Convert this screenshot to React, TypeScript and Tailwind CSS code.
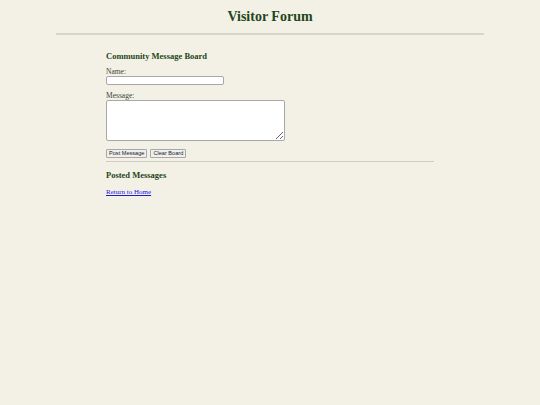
export default function App() {
  return (
    <div
      className="min-h-[405px] bg-[#f3f0e5] text-[#333] pt-[9px]"
      style={{ fontFamily: '"Liberation Serif", "DejaVu Serif", serif' }}
    >
      {/* Header */}
      <div className="mx-auto w-[428px]">
        <h1 className="text-center text-[14px] leading-[16px] font-bold text-[#1e4620]">Visitor Forum</h1>
        <div className="mt-[8px] h-[2px] bg-[#d8d5cc]" />
      </div>

      {/* Board */}
      <div className="mx-auto w-[328px] mt-[16px]">
        <h2 className="text-[8.5px] leading-[10px] font-bold text-[#1e4620]">Community Message Board</h2>

        <label className="block mt-[7px] text-[7.5px] leading-[8px] text-[#3b463b]">Name:</label>
        <input
          type="text"
          className="block w-[118px] h-[9px] bg-white border border-[#a8a8a8] rounded-[2px]"
        />

        <label className="block mt-[7px] text-[7.5px] leading-[8px] text-[#3b463b]">Message:</label>
        <textarea className="block w-[179px] h-[41px] bg-white border border-[#a8a8a8] rounded-[2px] resize" />

        <div
          className="flex gap-[3px] mt-[8px]"
          style={{ fontFamily: '"Liberation Sans", Arial, sans-serif' }}
        >
          <button className="h-[9px] px-[2px] text-[5.6px] leading-[7px] text-[#222] bg-[#efefef] border border-[#a8a8a8] rounded-[1px]">
            Post Message
          </button>
          <button className="h-[9px] px-[2px] text-[5.6px] leading-[7px] text-[#222] bg-[#efefef] border border-[#a8a8a8] rounded-[1px]">
            Clear Board
          </button>
        </div>

        <div className="mt-[3px] h-px bg-[#cfccc3]" />

        <h2 className="mt-[8px] text-[8.5px] leading-[10px] font-bold text-[#1e4620]">Posted Messages</h2>

        <a href="#" className="block mt-[8px] text-[7px] leading-[8px] text-[#1a1ad6] underline decoration-[#1a1ad6]">
          Return to Home
        </a>
      </div>
    </div>
  );
}
